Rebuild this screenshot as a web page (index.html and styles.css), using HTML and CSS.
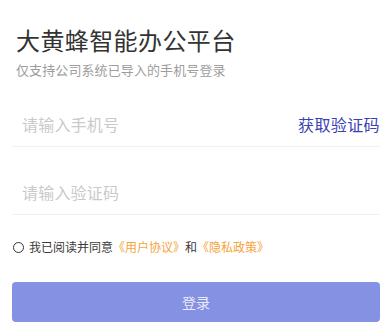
FILE: index.html
```html
<!DOCTYPE html>
<html lang="zh">
<head>
<meta charset="utf-8">
<link rel="stylesheet" href="styles.css">
</head>
<body>
<div class="page">
  <div class="header">
    <h1 class="title">大黄蜂智能办公平台</h1>
    <p class="subtitle">仅支持公司系统已导入的手机号登录</p>
  </div>
  <div class="form">
    <div class="field">
      <span class="placeholder">请输入手机号</span>
      <span class="code-btn">获取验证码</span>
    </div>
    <div class="field">
      <span class="placeholder">请输入验证码</span>
    </div>
  </div>
  <div class="agree">
    <span class="radio"></span>
    <span class="agree-text">我已阅读并同意<span class="link">《用户协议》</span>和<span class="link">《隐私政策》</span></span>
  </div>
  <div class="btn">登录</div>
</div>
</body>
</html>
```
FILE: styles.css
```css
* { box-sizing: border-box; }
html, body {
  margin: 0;
  padding: 0;
  background: #ffffff;
  font-family: "Noto Sans CJK SC", "Noto Sans", sans-serif;
}
.page {
  width: 391px;
  height: 334px;
  padding: 0 11px 0 12px;
  display: flex;
  flex-direction: column;
}
.header {
  padding: 24px 0 0 4px;
}
.title {
  margin: 0;
  font-size: 24px;
  font-weight: 400;
  line-height: 32px;
  color: #333333;
  letter-spacing: 0.4px;
}
.subtitle {
  margin: 5px 0 0 0;
  font-size: 13px;
  line-height: 18px;
  color: #9d9d9d;
  letter-spacing: 0.1px;
}
.form {
  margin-top: 22px;
  display: flex;
  flex-direction: column;
  gap: 22px;
}
.field {
  height: 46px;
  display: flex;
  align-items: center;
  justify-content: space-between;
  padding-left: 10px;
  border-bottom: 1px solid #f1f1f1;
}
.placeholder {
  font-size: 16px;
  color: #cacaca;
  letter-spacing: 0.2px;
}
.code-btn {
  font-size: 16px;
  color: #3a41b4;
  letter-spacing: 0.4px;
}
.agree {
  margin-top: 23px;
  height: 18px;
  display: flex;
  align-items: center;
  gap: 5px;
  padding-left: 1px;
}
.radio {
  width: 11px;
  height: 11px;
  border: 1px solid #333333;
  border-radius: 50%;
}
.agree-text {
  font-size: 12px;
  color: #3a3a3a;
  line-height: 18px;
}
.link {
  color: #f5a43a;
}
.btn {
  margin-top: 26px;
  height: 40px;
  border-radius: 4px;
  background: #8591e3;
  color: #e9ebfa;
  font-size: 14px;
  display: flex;
  align-items: center;
  justify-content: center;
}
```
